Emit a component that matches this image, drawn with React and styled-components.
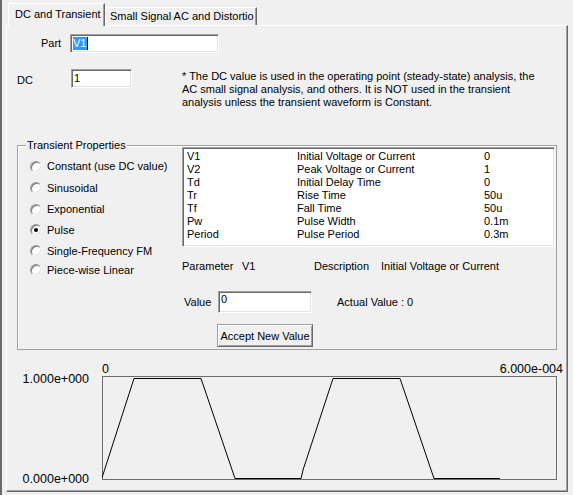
import React from "react";
import styled, { createGlobalStyle } from "styled-components";

const GlobalStyle = createGlobalStyle`
  html, body { margin: 0; padding: 0; background: #f0f0f0; }
  body {
    font-family: "Liberation Sans", Arial, sans-serif;
    font-size: 11px;
    color: #000;
  }
`;

const Window = styled.div`
  width: 573px;
  height: 495px;
  box-sizing: border-box;
  padding: 3px 0 0 6px;
  background: #f0f0f0;
  box-shadow: inset 2px 0 0 #6b6b6b;
  overflow: hidden;
`;

const TabStrip = styled.div`
  display: flex;
  align-items: flex-end;
  height: 22px;
  padding-left: 2px;
  position: relative;
  z-index: 1;
`;

const Tab = styled.div`
  box-sizing: border-box;
  width: ${(p) => p.$w}px;
  height: ${(p) => (p.$active ? 23 : 18)}px;
  margin-bottom: ${(p) => (p.$active ? -1 : 0)}px;
  padding: ${(p) => (p.$active ? "4px 0 0 6px" : "2px 0 0 4px")};
  border-top: 1px solid #fff;
  border-left: 1px solid #fff;
  border-right: 1px solid #696969;
  box-shadow: inset -1px 0 0 #a0a0a0;
  background: #f0f0f0;
  line-height: 13px;
  white-space: nowrap;
`;

const Panel = styled.div`
  box-sizing: border-box;
  width: 562px;
  height: 467px;
  border-top: 1px solid #fff;
  border-left: 1px solid #fff;
  border-right: 1px solid #696969;
  border-bottom: 1px solid #696969;
  box-shadow: inset -1px -1px 0 #a0a0a0;
  background: #f0f0f0;
`;

const PartRow = styled.div`
  display: flex;
  align-items: center;
  margin-top: 8px;
  padding-left: 34px;
`;

const FieldLabel = styled.span`
  width: ${(p) => p.$w}px;
  padding-top: ${(p) => p.$pt || 0}px;
  line-height: 13px;
  flex: none;
`;

const TextBox = styled.div`
  box-sizing: border-box;
  width: ${(p) => p.$w}px;
  height: ${(p) => p.$h}px;
  padding: ${(p) => p.$pt}px 0 0 2px;
  background: #fff;
  border: 1px solid;
  border-color: #a0a0a0 #fff #fff #a0a0a0;
  box-shadow: inset 1px 1px 0 #696969, inset -1px -1px 0 #e3e3e3;
  line-height: 13px;
  white-space: nowrap;
  flex: none;
`;

const Selected = styled.span`
  display: inline-block;
  background: #3399ff;
  color: #fff;
  padding-right: 1px;
  border-right: 1px solid #000;
`;

const DcRow = styled.div`
  display: flex;
  align-items: flex-start;
  margin-top: 16px;
  padding-left: 10px;
`;

const Note = styled.div`
  margin-left: 50px;
  padding-top: 0.5px;
  line-height: 13px;
  white-space: nowrap;
`;

const NoteLine = styled.div``;

const GroupBox = styled.div`
  position: relative;
  box-sizing: border-box;
  width: 540px;
  height: 205px;
  margin: 36.5px 0 0 10px;
  border: 1px solid #a0a0a0;
  box-shadow: inset 1px 1px 0 #fff;
  display: flex;
`;

const GroupTitle = styled.span`
  position: absolute;
  top: -7px;
  left: 8px;
  padding: 0 1px;
  background: #f0f0f0;
  line-height: 13px;
`;

const RadioCol = styled.div`
  width: 164px;
  box-sizing: border-box;
  padding-left: 12px;
  display: flex;
  flex-direction: column;
`;

const RadioRow = styled.div`
  display: flex;
  align-items: center;
  gap: 5px;
  height: 13px;
  margin-top: ${(p) => p.$mt}px;
  line-height: 13px;
  white-space: nowrap;
`;

const RadioCircle = styled.span`
  box-sizing: border-box;
  width: 12px;
  height: 12px;
  border-radius: 50%;
  background: #fff;
  border: 1px solid;
  border-color: #9a9a9a #f4f4f4 #f4f4f4 #9a9a9a;
  box-shadow: inset 1px 1px 0 #7a7a7a, inset -1px -1px 0 #e3e3e3;
  display: flex;
  align-items: center;
  justify-content: center;
  flex: none;
`;

const RadioDot = styled.span`
  width: 4px;
  height: 4px;
  border-radius: 50%;
  background: #000;
`;

const RightCol = styled.div`
  display: flex;
  flex-direction: column;
  align-items: flex-start;
  padding-top: 1px;
`;

const ListBox = styled.div`
  box-sizing: border-box;
  width: 373px;
  height: 100px;
  padding: 2px 0 0 4px;
  background: #fff;
  border: 1px solid;
  border-color: #a0a0a0 #fff #fff #a0a0a0;
  box-shadow: inset 1px 1px 0 #696969, inset -1px -1px 0 #e3e3e3;
`;

const ListRow = styled.div`
  display: grid;
  grid-template-columns: 110px 187px auto;
  line-height: 13px;
  white-space: nowrap;
`;

const ParamRow = styled.div`
  display: grid;
  grid-template-columns: 60px 72px 67px auto;
  margin-top: 12.5px;
  line-height: 13px;
  white-space: nowrap;
`;

const ValueRow = styled.div`
  display: flex;
  align-items: center;
  margin-top: 18.5px;
  padding-left: 2px;
`;

const ActualValue = styled.span`
  margin-left: 25px;
  line-height: 13px;
`;

const Button = styled.button`
  box-sizing: border-box;
  width: 96px;
  height: 23px;
  margin: 11px 0 0 35px;
  padding: 0;
  font: inherit;
  color: #000;
  background: #f0f0f0;
  border: 1px solid;
  border-color: #a0a0a0 #696969 #696969 #a0a0a0;
  box-shadow: inset 1px 1px 0 #fff, inset -1px -1px 0 #a0a0a0;
  white-space: nowrap;
`;

const GraphArea = styled.div`
  margin-top: 13px;
  font-size: 12.5px;
`;

const XAxisRow = styled.div`
  display: flex;
  justify-content: space-between;
  margin-left: 95px;
  width: 461px;
  line-height: 13px;
`;

const PlotRow = styled.div`
  display: flex;
`;

const YAxis = styled.div`
  box-sizing: border-box;
  width: 95px;
  padding-right: 13px;
  margin: -3px 0 -6px;
  display: flex;
  flex-direction: column;
  justify-content: space-between;
  align-items: flex-end;
  line-height: 13px;
`;

const Plot = styled.svg`
  display: block;
  flex: none;
`;

const params = [
  ["V1", "Initial Voltage or Current", "0"],
  ["V2", "Peak Voltage or Current", "1"],
  ["Td", "Initial Delay Time", "0"],
  ["Tr", "Rise Time", "50u"],
  ["Tf", "Fall Time", "50u"],
  ["Pw", "Pulse Width", "0.1m"],
  ["Period", "Pulse Period", "0.3m"],
];

const radios = [
  ["Constant (use DC value)", 14],
  ["Sinusoidal", 8.5],
  ["Exponential", 8.5],
  ["Pulse", 7.5, true],
  ["Single-Frequency FM", 8],
  ["Piece-wise Linear", 6],
];

const wave =
  "0,101.7 32,2.5 99,2.5 133,102.5 199,102.5 201,94 231,2.5 298,2.5 332,102.5 398,102.5";

export default function App() {
  return (
    <>
      <GlobalStyle />
      <Window>
        <TabStrip>
          <Tab $active $w={97}>DC and Transient</Tab>
          <Tab $w={152}>Small Signal AC and Distortio</Tab>
        </TabStrip>
        <Panel>
          <PartRow>
            <FieldLabel $w={29}>Part</FieldLabel>
            <TextBox $w={149} $h={19} $pt={2}>
              <Selected>V1</Selected>
            </TextBox>
          </PartRow>
          <DcRow>
            <FieldLabel $w={54} $pt={4.5}>DC</FieldLabel>
            <TextBox $w={61} $h={19} $pt={2}>1</TextBox>
            <Note>
              <NoteLine>* The DC value is used in the operating point (steady-state) analysis, the</NoteLine>
              <NoteLine>AC small signal analysis, and others. It is NOT used in the transient</NoteLine>
              <NoteLine>analysis unless the transient waveform is Constant.</NoteLine>
            </Note>
          </DcRow>
          <GroupBox>
            <GroupTitle>Transient Properties</GroupTitle>
            <RadioCol>
              {radios.map(([label, mt, on]) => (
                <RadioRow key={label} $mt={mt}>
                  <RadioCircle>{on && <RadioDot />}</RadioCircle>
                  {label}
                </RadioRow>
              ))}
            </RadioCol>
            <RightCol>
              <ListBox>
                {params.map(([n, d, v]) => (
                  <ListRow key={n}>
                    <span>{n}</span>
                    <span>{d}</span>
                    <span>{v}</span>
                  </ListRow>
                ))}
              </ListBox>
              <ParamRow>
                <span>Parameter</span>
                <span>V1</span>
                <span>Description</span>
                <span>Initial Voltage or Current</span>
              </ParamRow>
              <ValueRow>
                <FieldLabel $w={34}>Value</FieldLabel>
                <TextBox $w={94} $h={22} $pt={1}>0</TextBox>
                <ActualValue>Actual Value : 0</ActualValue>
              </ValueRow>
              <Button>Accept New Value</Button>
            </RightCol>
          </GroupBox>
          <GraphArea>
            <XAxisRow>
              <span>0</span>
              <span>6.000e-004</span>
            </XAxisRow>
            <PlotRow>
              <YAxis>
                <span>1.000e+000</span>
                <span>0.000e+000</span>
              </YAxis>
              <Plot width="455" height="104" viewBox="0 0 455 104">
                <rect x="0.5" y="0.5" width="454" height="103" fill="none" stroke="#6d6d6d" strokeWidth="1" />
                <polyline points={wave} fill="none" stroke="#000" strokeWidth="1" />
              </Plot>
            </PlotRow>
          </GraphArea>
        </Panel>
      </Window>
    </>
  );
}
